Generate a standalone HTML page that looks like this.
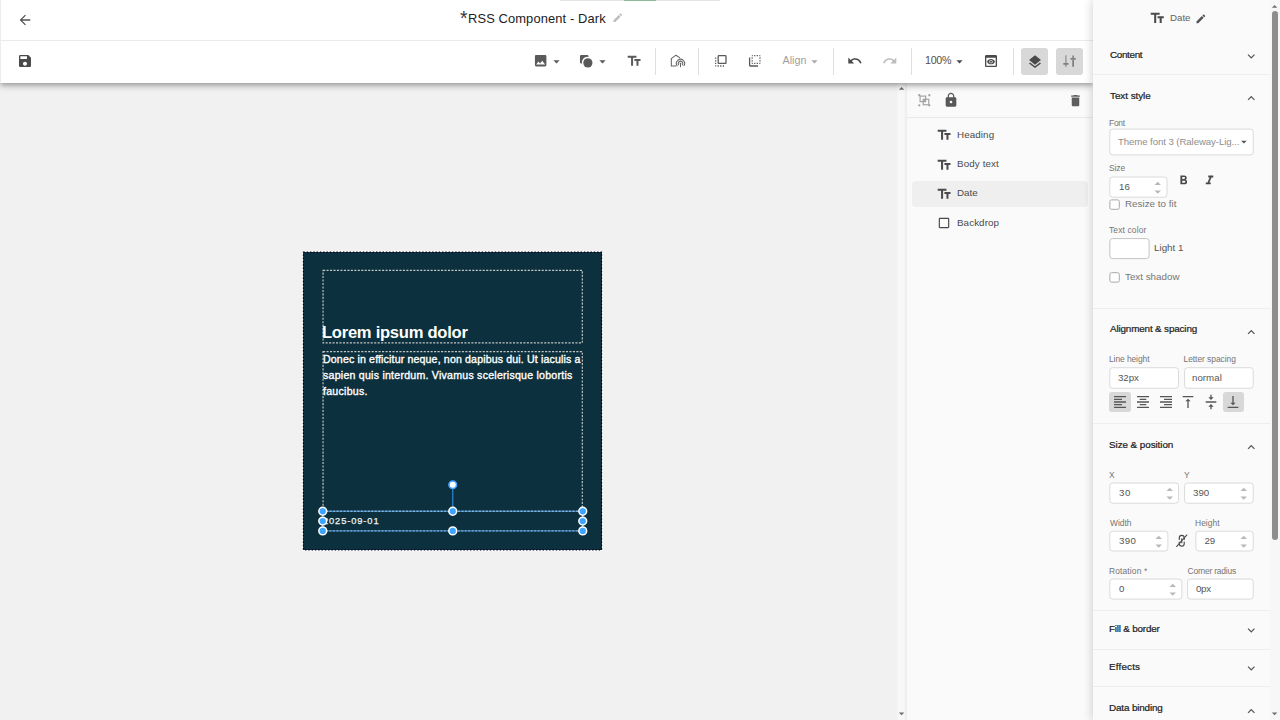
<!DOCTYPE html>
<html lang="en"><head><meta charset="utf-8"><title>RSS Component - Dark</title>
<style>
html,body{margin:0;padding:0}
body{width:1280px;height:720px;position:relative;overflow:hidden;background:#f1f1f1;font-family:"Liberation Sans",sans-serif}
.t{position:absolute;white-space:pre;line-height:20px}
.i{position:absolute;overflow:visible}
.b{position:absolute;box-sizing:border-box}
.in{background:#fff;border:1px solid #dcdcdc;border-radius:3px}
.cb{background:#fff;border:1px solid #a3a3a3;border-radius:2px}
</style></head><body>

<div class="b" style="left:897.00px;top:83.00px;width:10.00px;height:637.00px;background:linear-gradient(90deg,#f3f3f3 0,#f8f8f8 20%,#f7f7f7 70%,#ebebeb 100%)"></div>
<svg class="i" style="left:894.90px;top:81.97px" width="13.2" height="13.2" viewBox="0 0 24 24"><path d="M7 14l5-5 5 5z" fill="#6e6e6e"/></svg>
<svg class="i" style="left:895.00px;top:706.62px" width="13.2" height="13.2" viewBox="0 0 24 24"><path d="M7 10l5 5 5-5z" fill="#6e6e6e"/></svg>
<div class="b" style="left:907.00px;top:83.00px;width:186.00px;height:637.00px;background:#fafafa"></div>
<div class="b" style="left:907.00px;top:117.00px;width:186.00px;height:1.00px;background:#e9e9e9"></div>
<div class="b" style="left:912.00px;top:181.00px;width:176.00px;height:25.70px;background:#efefef;border-radius:4px"></div>
<svg class="i" style="left:917.70px;top:93.70px" width="12.6" height="12.6" viewBox="0 0 24 24"><rect x="10" y="10" width="4.5" height="4.5" fill="#a9a9a9"/><g fill="none" stroke="#a3a3a3" stroke-width="2.3"><rect x="4" y="4" width="10.5" height="10.5"/><rect x="10" y="10" width="10.5" height="10.5"/></g><g fill="#a3a3a3"><circle cx="2.4" cy="2.4" r="2.2"/><circle cx="21.6" cy="2.4" r="2.2"/><circle cx="2.4" cy="21.6" r="2.200"/><circle cx="21.6" cy="21.6" r="2.2"/></g></svg>
<svg class="i" style="left:942.60px;top:91.93px" width="16" height="16" viewBox="0 0 24 24"><path d="M18 8h-1V6c0-2.76-2.24-5-5-5S7 3.24 7 6v2H6c-1.1 0-2 .9-2 2v10c0 1.1.9 2 2 2h12c1.1 0 2-.9 2-2V10c0-1.1-.9-2-2-2zm-6 9c-1.1 0-2-.9-2-2s.9-2 2-2 2 .9 2 2-.9 2-2 2zm3.1-9H8.9V6c0-1.71 1.39-3.1 3.1-3.1 1.71 0 3.1 1.39 3.1 3.1v2z" fill="#585858"/></svg>
<svg class="i" style="left:1068.20px;top:92.90px" width="15" height="15" viewBox="0 0 24 24"><path d="M6 19c0 1.1.9 2 2 2h8c1.1 0 2-.9 2-2V7H6v12zM19 4h-3.5l-1-1h-5l-1 1H5v2h14V4z" fill="#5e5e5e"/></svg>
<svg class="i" style="left:936.10px;top:127.24px" width="16.2" height="16.2" viewBox="0 0 24 24"><path d="M2.5 4v3h5v12h3V7h5V4h-13zm19 5h-9v3h3v7h3v-7h3V9z" fill="#4a4a4a"/></svg>
<svg class="i" style="left:936.10px;top:156.54px" width="16.2" height="16.2" viewBox="0 0 24 24"><path d="M2.5 4v3h5v12h3V7h5V4h-13zm19 5h-9v3h3v7h3v-7h3V9z" fill="#4a4a4a"/></svg>
<svg class="i" style="left:936.10px;top:185.84px" width="16.2" height="16.2" viewBox="0 0 24 24"><path d="M2.5 4v3h5v12h3V7h5V4h-13zm19 5h-9v3h3v7h3v-7h3V9z" fill="#4a4a4a"/></svg>
<svg class="i" style="left:937.10px;top:216.30px" width="14" height="14" viewBox="0 0 24 24"><path d="M19 5v14H5V5h14m0-2H5c-1.1 0-2 .9-2 2v14c0 1.1.9 2 2 2h14c1.1 0 2-.9 2-2V5c0-1.1-.9-2-2-2z" fill="#4a4a4a"/></svg>
<div class="b" style="left:303.00px;top:251.80px;width:299.00px;height:298.30px;background:#0c303d"></div>
<svg class="i" style="left:0;top:0" width="906" height="720" viewBox="0 0 906 720"><rect x="302.6" y="251.4" width="299.9" height="299.2" fill="none" stroke="#fff" stroke-opacity=".85" stroke-width="1"/><rect x="303.4" y="252.2" width="298.2" height="297.6" fill="none" stroke="#04001c" stroke-width="1.2" stroke-dasharray="1.4 1.9"/><g fill="none" stroke="#c4c4c4" stroke-width="1.15" stroke-dasharray="2.1 1.37"><rect x="323.05" y="270.35" width="259.25" height="72.55"/><rect x="323.05" y="351.65" width="259.25" height="159.6"/></g><rect x="322.75" y="511.25" width="260" height="19.65" fill="none" stroke="#2b77b8" stroke-width="1.3"/><rect x="322.75" y="511.25" width="260" height="19.65" fill="none" stroke="#cfe2f3" stroke-width="0.7" stroke-dasharray="2.1 1.37"/><line x1="452.75" y1="485" x2="452.75" y2="511" stroke="#2e7fc6" stroke-width="1.3"/></svg>
<div class="t" style="left:322.00px;top:323.35px;font-size:16.6px;font-weight:700;color:#fff;letter-spacing:-0.275px;">Lorem ipsum dolor</div>
<div class="t" style="left:323.00px;top:349.23px;font-size:10.6px;font-weight:400;color:#fff;letter-spacing:0.148px;-webkit-text-stroke:0.35px #fff;">Donec in efficitur neque, non dapibus dui. Ut iaculis a</div>
<div class="t" style="left:323.00px;top:365.13px;font-size:10.6px;font-weight:400;color:#fff;letter-spacing:0.237px;-webkit-text-stroke:0.35px #fff;">sapien quis interdum. Vivamus scelerisque lobortis</div>
<div class="t" style="left:323.00px;top:380.93px;font-size:10.6px;font-weight:400;color:#fff;letter-spacing:0.250px;-webkit-text-stroke:0.35px #fff;">faucibus.</div>
<div class="t" style="left:323.00px;top:510.68px;font-size:9.3px;font-weight:400;color:#f2f2f2;letter-spacing:0.889px;-webkit-text-stroke:0.25px #f2f2f2;">2025-09-01</div>
<svg class="i" style="left:0;top:0" width="906" height="720" viewBox="0 0 906 720"><circle cx="322.75" cy="511.25" r="3.9" fill="#3fa4ff" stroke="#fff" stroke-width="1.5"/><circle cx="322.75" cy="530.9" r="3.9" fill="#3fa4ff" stroke="#fff" stroke-width="1.5"/><circle cx="452.75" cy="511.25" r="3.9" fill="#3fa4ff" stroke="#fff" stroke-width="1.5"/><circle cx="452.75" cy="530.9" r="3.9" fill="#3fa4ff" stroke="#fff" stroke-width="1.5"/><circle cx="582.75" cy="511.25" r="3.9" fill="#3fa4ff" stroke="#fff" stroke-width="1.5"/><circle cx="582.75" cy="530.9" r="3.9" fill="#3fa4ff" stroke="#fff" stroke-width="1.5"/><circle cx="322.75" cy="521.05" r="3.9" fill="#3fa4ff" stroke="#fff" stroke-width="1.5"/><circle cx="582.75" cy="521.05" r="3.9" fill="#3fa4ff" stroke="#fff" stroke-width="1.5"/><circle cx="452.75" cy="484.75" r="3.8" fill="#fff" stroke="#3fa4ff" stroke-width="1.6"/></svg>
<div class="b" style="left:0.00px;top:0.00px;width:1093.00px;height:83.00px;background:#fff;box-shadow:0 2px 4px -1px rgba(0,0,0,.2),0 4px 5px 0 rgba(0,0,0,.14),0 1px 10px 0 rgba(0,0,0,.12)"></div>
<div class="b" style="left:0.00px;top:40.00px;width:1093.00px;height:1.00px;background:#ebebeb"></div>
<div class="b" style="left:0.00px;top:0.00px;width:1.00px;height:83.00px;background:#ededed"></div>
<div class="b" style="left:560.00px;top:0.00px;width:160.00px;height:1.00px;background:#e3e3e3"></div>
<div class="b" style="left:624.00px;top:0.00px;width:32.00px;height:1.00px;background:#8fb89a"></div>
<svg class="i" style="left:16.50px;top:12.00px" width="16" height="16" viewBox="0 0 24 24"><path d="M20 11H7.83l5.59-5.59L12 4l-8 8 8 8 1.41-1.41L7.83 13H20v-2z" fill="#555"/></svg>
<svg class="i" style="left:16.80px;top:53.30px" width="16" height="16" viewBox="0 0 24 24"><path d="M17 3H5c-1.11 0-2 .9-2 2v14c0 1.1.89 2 2 2h14c1.1 0 2-.9 2-2V7l-4-4zm-5 16c-1.66 0-3-1.34-3-3s1.34-3 3-3 3 1.34 3 3-1.34 3-3 3zm3-10H5V5h10v4z" fill="#4a4a4a"/></svg>
<svg class="i" style="left:611.95px;top:12.35px" width="11.5" height="11.5" viewBox="0 0 24 24"><path d="M3 17.25V21h3.75L17.81 9.94l-3.75-3.75L3 17.25zM20.71 7.04c.39-.39.39-1.02 0-1.41l-2.34-2.34c-.39-.39-1.02-.39-1.41 0l-1.83 1.83 3.75 3.75 1.83-1.83z" fill="#bdbdbd"/></svg>
<svg class="i" style="left:533.10px;top:52.95px" width="15.3" height="15.3" viewBox="0 0 24 24"><path d="M21 19V5c0-1.1-.9-2-2-2H5c-1.1 0-2 .9-2 2v14c0 1.1.9 2 2 2h14c1.1 0 2-.9 2-2zM8.5 13.5l2.5 3.01L14.5 12l4.5 6H5l3.5-4.5z" fill="#5a5a5a"/></svg>
<svg class="i" style="left:549.10px;top:53.59px" width="15" height="15" viewBox="0 0 24 24"><path d="M7 10l5 5 5-5z" fill="#5a5a5a"/></svg>
<svg class="i" style="left:578.02px;top:52.57px" width="15.8" height="15.8" viewBox="0 0 24 24"><path d="M5 3h9a2 2 0 0 1 2 2v1.2A8 8 0 0 0 6.2 16H5a2 2 0 0 1-2-2V5a2 2 0 0 1 2-2z" fill="#5a5a5a"/><circle cx="15" cy="15" r="7" fill="#5a5a5a"/></svg>
<svg class="i" style="left:594.50px;top:53.59px" width="15" height="15" viewBox="0 0 24 24"><path d="M7 10l5 5 5-5z" fill="#5a5a5a"/></svg>
<svg class="i" style="left:626.10px;top:53.04px" width="16.2" height="16.2" viewBox="0 0 24 24"><path d="M2.5 4v3h5v12h3V7h5V4h-13zm19 5h-9v3h3v7h3v-7h3V9z" fill="#5a5a5a"/></svg>
<div class="b" style="left:655.00px;top:48.00px;width:1.00px;height:26.50px;background:#dedede"></div>
<div class="b" style="left:698.30px;top:48.00px;width:1.00px;height:26.50px;background:#dedede"></div>
<div class="b" style="left:833.00px;top:48.00px;width:1.00px;height:26.50px;background:#dedede"></div>
<div class="b" style="left:911.00px;top:48.00px;width:1.00px;height:26.50px;background:#dedede"></div>
<div class="b" style="left:1012.50px;top:48.00px;width:1.00px;height:26.50px;background:#dedede"></div>
<svg class="i" style="left:664px;top:50px" width="30" height="22" viewBox="664 50 30 22"><g fill="none" stroke="#636363" stroke-width="1.05" stroke-linejoin="round" stroke-linecap="round"><path d="M675.9 65.9H671.33V58.55L675.9 55.2L679.6 57.65"/><path d="M677.1 65.65A4.1 4.1 0 1 1 683.9 65.65"/><path d="M678.55 64.7A2.3 2.3 0 1 1 682.45 64.7"/><path d="M680.5 63.6V66.8"/></g><circle cx="680.5" cy="63.45" r="0.75" fill="#636363"/></svg>
<svg class="i" style="left:712.80px;top:53.20px" width="15.6" height="15.6" viewBox="0 0 24 24"><path d="M3 13h2v-2H3v2zm0 4h2v-2H3v2zm2 4v-2H3c0 1.1.89 2 2 2zM3 9h2V7H3v2zm12 12h2v-2h-2v2zm4-18H9c-1.11 0-2 .9-2 2v10c0 1.1.89 2 2 2h10c1.1 0 2-.9 2-2V5c0-1.1-.9-2-2-2zm0 12H9V5h10v10zm-8 6h2v-2h-2v2zm-4 0h2v-2H7v2z" fill="#5a5a5a"/></svg>
<svg class="i" style="left:747.10px;top:53.20px" width="15.6" height="15.6" viewBox="0 0 24 24"><path d="M9 7H7v2h2V7zm0 4H7v2h2v-2zm0-8c-1.11 0-2 .9-2 2h2V3zm4 12h-2v2h2v-2zm6-12v2h2c0-1.1-.9-2-2-2zm-6 0h-2v2h2V3zM9 17v-2H7c0 1.1.89 2 2 2zm10-4h2v-2h-2v2zm0-4h2V7h-2v2zm0 8c1.1 0 2-.9 2-2h-2v2zM5 7H3v12c0 1.1.89 2 2 2h12v-2H5V7zm10-2h2V3h-2v2zm0 12h2v-2h-2v2z" fill="#5a5a5a"/></svg>
<svg class="i" style="left:807.10px;top:53.59px" width="15" height="15" viewBox="0 0 24 24"><path d="M7 10l5 5 5-5z" fill="#a8a8a8"/></svg>
<svg class="i" style="left:847.27px;top:53.04px" width="15.6" height="15.6" viewBox="0 0 24 24"><path d="M12.5 8c-2.65 0-5.05.99-6.9 2.6L2 7v9h9l-3.62-3.62c1.39-1.16 3.16-1.88 5.12-1.88 3.54 0 6.55 2.31 7.6 5.5l2.37-.78C21.08 11.03 17.15 8 12.5 8z" fill="#4a4a4a"/></svg>
<svg class="i" style="left:882.33px;top:53.04px" width="15.6" height="15.6" viewBox="0 0 24 24"><path d="M18.4 10.6C16.55 8.99 14.15 8 11.5 8c-4.65 0-8.58 3.03-9.96 7.22L3.9 16c1.05-3.19 4.05-5.5 7.6-5.5 1.95 0 3.73.72 5.12 1.88L13 16h9V7l-3.6 3.6z" fill="#bdbdbd"/></svg>
<svg class="i" style="left:952.00px;top:53.59px" width="15" height="15" viewBox="0 0 24 24"><path d="M7 10l5 5 5-5z" fill="#4a4a4a"/></svg>
<svg class="i" style="left:983.30px;top:53.20px" width="16" height="16" viewBox="0 0 24 24"><path d="M19 3H5c-1.11 0-2 .9-2 2v14c0 1.1.89 2 2 2h14c1.1 0 2-.9 2-2V5c0-1.1-.89-2-2-2zm0 16H5V7h14v12zm-5.5-6c0 .83-.67 1.5-1.5 1.5s-1.5-.67-1.5-1.5.67-1.5 1.5-1.5 1.5.67 1.5 1.5zM12 9c-2.73 0-5.06 1.66-6 4 .94 2.34 3.27 4 6 4s5.06-1.66 6-4c-.94-2.34-3.27-4-6-4zm0 6.500c-1.38 0-2.5-1.12-2.5-2.5s1.12-2.5 2.5-2.5 2.5 1.120 2.5 2.5-1.12 2.5-2.5 2.5z" fill="#4a4a4a"/></svg>
<div class="b" style="left:1021.30px;top:48.00px;width:26.70px;height:26.50px;background:#d8d8d8;border-radius:3px"></div>
<svg class="i" style="left:1026.70px;top:53.53px" width="16" height="16" viewBox="0 0 24 24"><path d="M11.99 18.54l-7.37-5.73L3 14.07l9 7 9-7-1.63-1.27-7.38 5.74zM12 16l7.36-5.73L21 9l-9-7-9 7 1.63 1.27L12 16z" fill="#4a4a4a"/></svg>
<div class="b" style="left:1056.10px;top:48.00px;width:26.65px;height:26.50px;background:#d8d8d8;border-radius:3px"></div>
<svg class="i" style="left:1056px;top:48px" width="28" height="27" viewBox="1056 48 28 27"><g fill="none" stroke-width="1.2"><path d="M1065.9 55.2V62.9" stroke="#8c8c8c"/><path d="M1063.3 63.9H1068.5" stroke="#6e6e6e" stroke-width="1.5"/><path d="M1065.9 64.7V66.8" stroke="#7c7c7c"/><path d="M1073.1 55.6V58" stroke="#666"/><path d="M1070.5 58.9H1075.7" stroke="#6e6e6e" stroke-width="1.5"/><path d="M1073.1 59.9V66.8" stroke="#555"/></g></svg>
<div class="b" style="left:1093.00px;top:0.00px;width:187.00px;height:720.00px;background:#fafafa;box-shadow:-2px 0 8px rgba(0,0,0,.15)"></div>
<div class="b" style="left:1270.00px;top:0.00px;width:10.00px;height:720.00px;background:#f7f7f7"></div>
<div class="b" style="left:1093.00px;top:74.10px;width:177.00px;height:1.00px;background:#eeeeee"></div>
<div class="b" style="left:1093.00px;top:307.50px;width:177.00px;height:1.00px;background:#eeeeee"></div>
<div class="b" style="left:1093.00px;top:422.50px;width:177.00px;height:1.00px;background:#eeeeee"></div>
<div class="b" style="left:1093.00px;top:609.80px;width:177.00px;height:1.00px;background:#eeeeee"></div>
<div class="b" style="left:1093.00px;top:648.60px;width:177.00px;height:1.00px;background:#eeeeee"></div>
<div class="b" style="left:1093.00px;top:685.75px;width:177.00px;height:1.00px;background:#eeeeee"></div>
<svg class="i" style="left:1149.15px;top:10.39px" width="16.5" height="16.5" viewBox="0 0 24 24"><path d="M2.5 4v3h5v12h3V7h5V4h-13zm19 5h-9v3h3v7h3v-7h3V9z" fill="#4a4a4a"/></svg>
<svg class="i" style="left:1194.65px;top:12.85px" width="11.7" height="11.7" viewBox="0 0 24 24"><path d="M3 17.25V21h3.75L17.81 9.94l-3.75-3.75L3 17.25zM20.71 7.04c.39-.39.39-1.02 0-1.41l-2.34-2.34c-.39-.39-1.02-.39-1.41 0l-1.83 1.83 3.75 3.75 1.83-1.83z" fill="#555"/></svg>
<svg class="i" style="left:1244.15px;top:49.17px" width="14.5" height="14.5" viewBox="0 0 24 24"><path d="M16.59 8.59L12 13.17 7.41 8.59 6 10l6 6 6-6z" fill="#555"/></svg>
<svg class="i" style="left:1244.15px;top:91.43px" width="14.5" height="14.5" viewBox="0 0 24 24"><path d="M12 8l-6 6 1.41 1.41L12 10.83l4.59 4.58L18 14z" fill="#555"/></svg>
<svg class="i" style="left:1244.15px;top:325.18px" width="14.5" height="14.5" viewBox="0 0 24 24"><path d="M12 8l-6 6 1.41 1.41L12 10.83l4.59 4.58L18 14z" fill="#555"/></svg>
<svg class="i" style="left:1244.15px;top:440.18px" width="14.5" height="14.5" viewBox="0 0 24 24"><path d="M12 8l-6 6 1.41 1.41L12 10.83l4.59 4.58L18 14z" fill="#555"/></svg>
<svg class="i" style="left:1244.15px;top:622.97px" width="14.5" height="14.5" viewBox="0 0 24 24"><path d="M16.59 8.59L12 13.17 7.41 8.59 6 10l6 6 6-6z" fill="#555"/></svg>
<svg class="i" style="left:1244.15px;top:660.97px" width="14.5" height="14.5" viewBox="0 0 24 24"><path d="M16.59 8.59L12 13.17 7.41 8.59 6 10l6 6 6-6z" fill="#555"/></svg>
<svg class="i" style="left:1244.15px;top:703.53px" width="14.5" height="14.5" viewBox="0 0 24 24"><path d="M12 8l-6 6 1.41 1.41L12 10.83l4.59 4.58L18 14z" fill="#555"/></svg>
<svg class="i" style="left:1093px;top:0px" width="187" height="720" viewBox="1093 0 187 720"><g fill="#fff" stroke="#dadada" stroke-width="1"><rect x="1109.80" y="129.10" width="143.40" height="25.80" rx="2.8"/><rect x="1109.80" y="177.00" width="57.20" height="20.20" rx="2.8"/><rect x="1109.80" y="367.70" width="68.70" height="20.55" rx="2.8"/><rect x="1184.60" y="367.70" width="68.60" height="20.55" rx="2.8"/><rect x="1109.80" y="483.00" width="68.70" height="20.20" rx="2.8"/><rect x="1184.60" y="483.00" width="68.60" height="20.20" rx="2.8"/><rect x="1109.80" y="531.20" width="58.10" height="19.80" rx="2.8"/><rect x="1195.90" y="531.20" width="57.30" height="19.80" rx="2.8"/><rect x="1109.80" y="579.00" width="72.10" height="20.10" rx="2.8"/><rect x="1187.60" y="579.00" width="65.60" height="20.10" rx="2.8"/><rect x="1109.8" y="238.6" width="39.3" height="20" rx="2.800" stroke="#c4c4c4"/><rect x="1109.9" y="199.9" width="9.4" height="9.400" rx="1.6" stroke="#a9a9a9"/><rect x="1109.9" y="272.7" width="9.4" height="9.400" rx="1.6" stroke="#a9a9a9"/></g></svg>
<svg class="i" style="left:1236.80px;top:135.21px" width="13.8" height="13.8" viewBox="0 0 24 24"><path d="M7 10l5 5 5-5z" fill="#555"/></svg>
<svg class="i" style="left:1149.65px;top:176.37px" width="15.5" height="15.5" viewBox="0 0 24 24"><path d="M7 14l5-5 5 5z" fill="#b8b8b8"/></svg>
<svg class="i" style="left:1149.65px;top:184.23px" width="15.5" height="15.5" viewBox="0 0 24 24"><path d="M7 10l5 5 5-5z" fill="#b8b8b8"/></svg>
<svg class="i" style="left:1161.55px;top:482.27px" width="15.5" height="15.5" viewBox="0 0 24 24"><path d="M7 14l5-5 5 5z" fill="#b8b8b8"/></svg>
<svg class="i" style="left:1161.55px;top:490.13px" width="15.5" height="15.5" viewBox="0 0 24 24"><path d="M7 10l5 5 5-5z" fill="#b8b8b8"/></svg>
<svg class="i" style="left:1236.25px;top:482.27px" width="15.5" height="15.5" viewBox="0 0 24 24"><path d="M7 14l5-5 5 5z" fill="#b8b8b8"/></svg>
<svg class="i" style="left:1236.25px;top:490.13px" width="15.5" height="15.5" viewBox="0 0 24 24"><path d="M7 10l5 5 5-5z" fill="#b8b8b8"/></svg>
<svg class="i" style="left:1150.65px;top:530.27px" width="15.5" height="15.5" viewBox="0 0 24 24"><path d="M7 14l5-5 5 5z" fill="#b8b8b8"/></svg>
<svg class="i" style="left:1150.65px;top:538.13px" width="15.5" height="15.5" viewBox="0 0 24 24"><path d="M7 10l5 5 5-5z" fill="#b8b8b8"/></svg>
<svg class="i" style="left:1236.25px;top:530.27px" width="15.5" height="15.5" viewBox="0 0 24 24"><path d="M7 14l5-5 5 5z" fill="#b8b8b8"/></svg>
<svg class="i" style="left:1236.25px;top:538.13px" width="15.5" height="15.5" viewBox="0 0 24 24"><path d="M7 10l5 5 5-5z" fill="#b8b8b8"/></svg>
<svg class="i" style="left:1164.95px;top:578.27px" width="15.5" height="15.5" viewBox="0 0 24 24"><path d="M7 14l5-5 5 5z" fill="#b8b8b8"/></svg>
<svg class="i" style="left:1164.95px;top:586.13px" width="15.5" height="15.5" viewBox="0 0 24 24"><path d="M7 10l5 5 5-5z" fill="#b8b8b8"/></svg>
<svg class="i" style="left:1175.84px;top:173.32px" width="15" height="15" viewBox="0 0 24 24"><path d="M15.6 10.79c.97-.67 1.65-1.77 1.65-2.79 0-2.26-1.75-4-4-4H7v14h7.04c2.09 0 3.71-1.7 3.71-3.79 0-1.52-.86-2.82-2.15-3.42zM10 6.5h3c.83 0 1.5.67 1.5 1.5s-.67 1.5-1.5 1.5h-3v-3zm3.5 9H10v-3h3.5c.83 0 1.5.67 1.5 1.5s-.67 1.5-1.5 1.5z" fill="#4a4a4a"/></svg>
<svg class="i" style="left:1202.00px;top:173.32px" width="15" height="15" viewBox="0 0 24 24"><path d="M10 4v3h2.21l-3.42 8H6v3h8v-3h-2.21l3.42-8H18V4z" fill="#4a4a4a"/></svg>
<div class="b" style="left:1109.30px;top:391.60px;width:21.40px;height:20.60px;background:#d8d8d8;border-radius:3px"></div>
<div class="b" style="left:1222.75px;top:391.60px;width:21.35px;height:20.60px;background:#d8d8d8;border-radius:3px"></div>
<svg class="i" style="left:1112.00px;top:394.00px" width="16" height="16" viewBox="0 0 24 24"><path d="M15 15H3v2h12v-2zm0-8H3v2h12V7zM3 13h18v-2H3v2zm0 8h18v-2H3v2zM3 3v2h18V3H3z" fill="#565656"/></svg>
<svg class="i" style="left:1134.60px;top:394.00px" width="16" height="16" viewBox="0 0 24 24"><path d="M7 15v2h10v-2H7zm-4 6h18v-2H3v2zm0-8h18v-2H3v2zm4-6v2h10V7H7zM3 3v2h18V3H3z" fill="#565656"/></svg>
<svg class="i" style="left:1157.50px;top:394.00px" width="16" height="16" viewBox="0 0 24 24"><path d="M3 21h18v-2H3v2zm6-4h12v-2H9v2zm-6-4h18v-2H3v2zm6-4h12V7H9v2zM3 3v2h18V3H3z" fill="#565656"/></svg>
<svg class="i" style="left:1180.00px;top:394.00px" width="16" height="16" viewBox="0 0 24 24"><path d="M8 11h3v10h2V11h3l-4-4-4 4zM4 3v2h16V3H4z" fill="#565656"/></svg>
<svg class="i" style="left:1202.70px;top:394.00px" width="16" height="16" viewBox="0 0 24 24"><path d="M8 19h3v4h2v-4h3l-4-4-4 4zm8-14h-3V1h-2v4H8l4 4 4-4zM4 11v2h16v-2H4z" fill="#565656"/></svg>
<svg class="i" style="left:1225.40px;top:394.00px" width="16" height="16" viewBox="0 0 24 24"><path d="M16 13h-3V3h-2v10H8l4 4 4-4zM4 19v2h16v-2H4z" fill="#565656"/></svg>
<svg class="i" style="left:1174.25px;top:532.85px" width="15.5" height="15.5" viewBox="0 0 24 24"><g fill="none" stroke="#4a4a4a" stroke-width="1.8" stroke-linecap="round"><path d="M8.2 10V7.5a3.8 3.8 0 0 1 7.6 0V10"/><path d="M8.2 14v2.5a3.8 3.8 0 0 0 7.600 0V14"/><path d="M12 9v6"/><path d="M20 3L4 21" stroke-width="1.6"/></g></svg>
<svg class="i" style="left:1268.40px;top:-0.32px" width="13.2" height="13.2" viewBox="0 0 24 24"><path d="M7 14l5-5 5 5z" fill="#6e6e6e"/></svg>
<svg class="i" style="left:1268.40px;top:706.73px" width="13.2" height="13.2" viewBox="0 0 24 24"><path d="M7 10l5 5 5-5z" fill="#6e6e6e"/></svg>
<div class="b" style="left:1272.00px;top:11.40px;width:6.00px;height:528.30px;background:#8d8d8d;border-radius:3px"></div>
<div class="t" style="left:460.00px;top:8.24px;font-size:19.5px;font-weight:400;color:#3a3a3a;letter-spacing:0.000px;">*</div>
<div class="t" style="left:468.00px;top:8.63px;font-size:12.9px;font-weight:400;color:#212121;letter-spacing:0.116px;">RSS Component - Dark</div>
<div class="t" style="left:782.50px;top:50.04px;font-size:10.7px;font-weight:400;color:#9e9e9e;letter-spacing:0.050px;">Align</div>
<div class="t" style="left:925.00px;top:50.04px;font-size:10.7px;font-weight:400;color:#4f4f4f;letter-spacing:-0.267px;">100%</div>
<div class="t" style="left:957.00px;top:124.60px;font-size:9.8px;font-weight:400;color:#4a4a4a;letter-spacing:0.100px;">Heading</div>
<div class="t" style="left:957.00px;top:153.90px;font-size:9.8px;font-weight:400;color:#4a4a4a;letter-spacing:0.125px;">Body text</div>
<div class="t" style="left:957.00px;top:182.80px;font-size:9.8px;font-weight:400;color:#4a4a4a;letter-spacing:0.000px;">Date</div>
<div class="t" style="left:957.00px;top:212.60px;font-size:9.8px;font-weight:400;color:#4a4a4a;letter-spacing:0.086px;">Backdrop</div>
<div class="t" style="left:1170.00px;top:8.04px;font-size:9.7px;font-weight:400;color:#616161;letter-spacing:0.000px;">Date</div>
<div class="t" style="left:1110.00px;top:44.72px;font-size:9.9px;font-weight:400;color:#212121;letter-spacing:-0.333px;-webkit-text-stroke:0.22px #212121;">Content</div>
<div class="t" style="left:1110.00px;top:86.22px;font-size:9.9px;font-weight:400;color:#212121;letter-spacing:-0.044px;-webkit-text-stroke:0.22px #212121;">Text style</div>
<div class="t" style="left:1109.00px;top:113.17px;font-size:8.45px;font-weight:400;color:#757575;letter-spacing:-0.267px;">Font</div>
<div class="t" style="left:1118.00px;top:132.07px;font-size:9.6px;font-weight:400;color:#8e8e8e;letter-spacing:-0.067px;">Theme font 3 (Raleway-Lig...</div>
<div class="t" style="left:1109.00px;top:158.07px;font-size:8.45px;font-weight:400;color:#757575;letter-spacing:-0.067px;">Size</div>
<div class="t" style="left:1119.00px;top:177.44px;font-size:9.7px;font-weight:400;color:#555;letter-spacing:0.000px;">16</div>
<div class="t" style="left:1125.00px;top:194.10px;font-size:9.8px;font-weight:400;color:#757575;letter-spacing:0.017px;">Resize to fit</div>
<div class="t" style="left:1109.00px;top:219.57px;font-size:8.45px;font-weight:400;color:#757575;letter-spacing:0.133px;">Text color</div>
<div class="t" style="left:1154.00px;top:237.60px;font-size:9.8px;font-weight:400;color:#555;letter-spacing:0.000px;">Light 1</div>
<div class="t" style="left:1125.00px;top:266.90px;font-size:9.8px;font-weight:400;color:#757575;letter-spacing:0.000px;">Text shadow</div>
<div class="t" style="left:1110.00px;top:318.82px;font-size:9.9px;font-weight:400;color:#212121;letter-spacing:-0.156px;-webkit-text-stroke:0.22px #212121;">Alignment &amp; spacing</div>
<div class="t" style="left:1109.00px;top:349.17px;font-size:8.45px;font-weight:400;color:#757575;letter-spacing:-0.080px;">Line height</div>
<div class="t" style="left:1183.50px;top:349.17px;font-size:8.45px;font-weight:400;color:#757575;letter-spacing:-0.046px;">Letter spacing</div>
<div class="t" style="left:1118.00px;top:367.54px;font-size:9.7px;font-weight:400;color:#555;letter-spacing:-0.067px;">32px</div>
<div class="t" style="left:1192.00px;top:367.54px;font-size:9.7px;font-weight:400;color:#555;letter-spacing:0.040px;">normal</div>
<div class="t" style="left:1109.00px;top:435.22px;font-size:9.9px;font-weight:400;color:#212121;letter-spacing:-0.071px;-webkit-text-stroke:0.22px #212121;">Size &amp; position</div>
<div class="t" style="left:1109.00px;top:464.92px;font-size:8.45px;font-weight:400;color:#757575;letter-spacing:0.000px;">X</div>
<div class="t" style="left:1184.00px;top:464.92px;font-size:8.45px;font-weight:400;color:#757575;letter-spacing:0.000px;">Y</div>
<div class="t" style="left:1119.00px;top:482.64px;font-size:9.7px;font-weight:400;color:#555;letter-spacing:0.600px;">30</div>
<div class="t" style="left:1193.00px;top:482.64px;font-size:9.7px;font-weight:400;color:#555;letter-spacing:0.000px;">390</div>
<div class="t" style="left:1110.00px;top:512.67px;font-size:8.45px;font-weight:400;color:#757575;letter-spacing:-0.050px;">Width</div>
<div class="t" style="left:1195.00px;top:512.67px;font-size:8.45px;font-weight:400;color:#757575;letter-spacing:0.040px;">Height</div>
<div class="t" style="left:1119.00px;top:530.54px;font-size:9.7px;font-weight:400;color:#555;letter-spacing:0.300px;">390</div>
<div class="t" style="left:1204.50px;top:530.54px;font-size:9.7px;font-weight:400;color:#555;letter-spacing:-0.200px;">29</div>
<div class="t" style="left:1109.00px;top:560.67px;font-size:8.45px;font-weight:400;color:#757575;letter-spacing:0.133px;">Rotation *</div>
<div class="t" style="left:1187.50px;top:560.67px;font-size:8.45px;font-weight:400;color:#757575;letter-spacing:-0.200px;">Corner radius</div>
<div class="t" style="left:1119.00px;top:579.34px;font-size:9.7px;font-weight:400;color:#555;letter-spacing:0.000px;">0</div>
<div class="t" style="left:1196.00px;top:579.34px;font-size:9.7px;font-weight:400;color:#555;letter-spacing:-0.300px;">0px</div>
<div class="t" style="left:1109.00px;top:618.82px;font-size:9.9px;font-weight:400;color:#212121;letter-spacing:-0.200px;-webkit-text-stroke:0.22px #212121;">Fill &amp; border</div>
<div class="t" style="left:1109.00px;top:656.92px;font-size:9.9px;font-weight:400;color:#212121;letter-spacing:0.167px;-webkit-text-stroke:0.22px #212121;">Effects</div>
<div class="t" style="left:1109.00px;top:697.62px;font-size:9.9px;font-weight:400;color:#212121;letter-spacing:-0.145px;-webkit-text-stroke:0.22px #212121;">Data binding</div>
</body></html>
